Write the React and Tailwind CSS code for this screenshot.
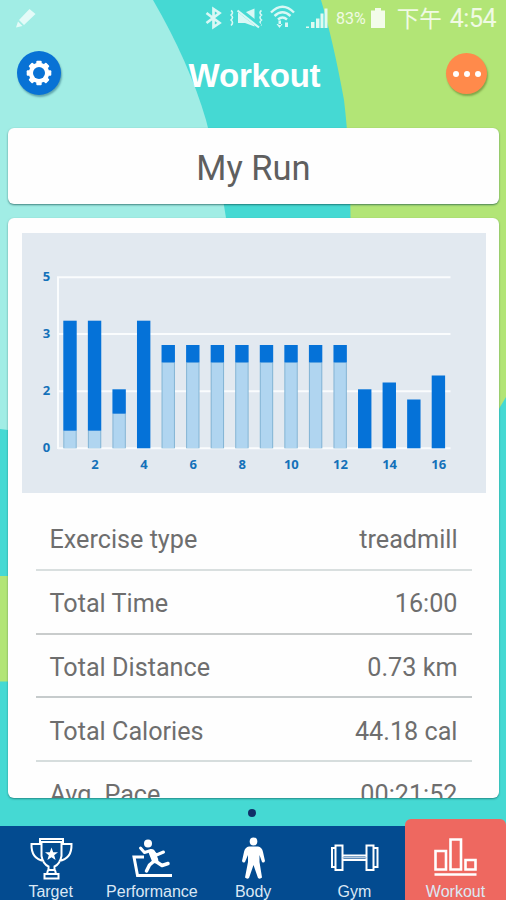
const chartBars = [
  [320.7, 430.7], [320.7, 430.7], [389.3, 413.7], [320.7, null],
  [345, 362.5], [345, 362.5], [345, 362.5], [345, 362.5],
  [345, 362.5], [345, 362.5], [345, 362.5], [345, 362.5],
  [389.3, null], [382.5, null], [399.5, null], [375.5, null],
];

const rows = [
  ['Exercise type', 'treadmill', 'h-[2px] bg-[#d9dfdf]'],
  ['Total Time', '16:00', 'h-[2px] bg-[#c9cccc]'],
  ['Total Distance', '0.73 km', 'h-[2px] bg-[#c6cbcc]'],
  ['Total Calories', '44.18 cal', 'h-[2px] bg-[#d6dddd]'],
  ['Avg. Pace', '00:21:52', 'h-[2px] bg-[#d9dfdf]'],
];

function Backdrop() {
  return (
    <svg className="absolute inset-0 h-full w-full" viewBox="0 0 506 900">
      <rect width="506" height="900" fill="#45d9d3" />
      <path d="M321 0Q333 40 344 100Q350 150 350.500 218V450H480L500 407L506 397V0Z" fill="#b2e576" />
      <path d="M0 0H153Q189 62 206 120Q219 170 226 218V430H8L0 429Z" fill="#a1ede5" />
      <rect y="576" width="20" height="105.500" fill="#b2e576" />
    </svg>
  );
}

function StatusBar() {
  return (
    <div className="flex h-9 items-start text-white/80">
      <svg className="h-9 w-[336px] shrink-0" viewBox="0 0 336 36" fill="none" stroke="#d9f8f5" strokeWidth="1.8">
        <path d="M29.500 9L35.500 14L24 25L19 20Z M18 21.500L22.500 26L16 27.500Z" fill="#e4fbf8" stroke="none" />
        <path d="M206.500 13L219.500 23L213.500 27V9L219.500 13L206.500 23" strokeWidth="2.700" />
        <path d="M231 10.500q3 2 0 4.500q3 2.500 0 5q3 2.500 0 5.500M261.500 10.500q-3 2 0 4.500q-3 2.500 0 5q-3 2.500 0 5.500" strokeWidth="1.600" />
        <path d="M238 12.500H245L254.500 8.500V26.500L245 23H238Z" fill="#d9f8f5" stroke="none" />
        <path d="M238 9L260 26.500" stroke="#45d9d3" strokeWidth="5" />
        <path d="M237.500 10.500L259 27.500" strokeWidth="2.200" />
        <path d="M271 12.500Q282.500 1 294 12.500M274.500 16Q282.500 8.500 290.500 16M278 19.500Q282.500 15.500 287 19.500" strokeWidth="2.400" />
        <path d="M276.500 24L279.500 28L282.500 24ZM278.500 20.500H281V25H278.500ZM285 27V22.500H288V27Z" fill="#d9f8f5" stroke="none" />
        <path d="M306 28V26.500H309V28ZM311 28V22H314.500V28ZM316 28V18.500H319.500V28ZM320.500 28V13.500H323.500V28ZM324.500 28V8.500H327.500V28Z" fill="#e0faf0" stroke="none" />
      </svg>
      <span className="mt-[9px] font-[Roboto,sans-serif] text-[16px] leading-5">83%</span>
      <svg className="ml-[4px] mt-2 h-5 w-4 shrink-0" viewBox="0 0 16 20">
        <path d="M5 0H11V2.500H15V20H1V2.500H5Z" fill="#f3fcea" />
      </svg>
      <span className="ml-auto mr-[10px] mt-[5px] flex gap-[8px] whitespace-nowrap font-[Roboto,'Noto_Sans_CJK_TC',sans-serif] text-[25px] leading-7 text-white/80"><span className="text-[22.500px]">下午</span><span className="tracking-[-0.5px]">4:54</span></span>
    </div>
  );
}

function Header() {
  return (
    <header className="flex h-[92px] items-start justify-between pl-[17px] pr-[19px] pt-[15px]">
      <button className="flex h-11 w-11 items-center justify-center rounded-full bg-[#0872d5] shadow-[1px_2px_2px_rgba(0,60,90,0.4)]">
        <svg className="h-7 w-7" viewBox="-14 -14 28 28">
          {[0, 45, 90, 135].map((a) => (
            <rect key={a} x="-2.700" y="-12.300" width="5.400" height="24.600" rx="1" fill="white" transform={`rotate(${a})`} />
          ))}
          <circle r="10.200" fill="white" />
          <circle r="6" fill="#0872d5" />
        </svg>
      </button>
      <h1 className="mt-[5px] pl-[2px] font-['Liberation_Sans',sans-serif] text-[33px] leading-10 font-bold tracking-[-0.2px] text-white">Workout</h1>
      <button className="mt-[2px] flex h-[41px] w-[41px] items-center justify-center gap-[5px] rounded-full bg-[#ff8a4b] shadow-[1px_2px_2px_rgba(70,90,20,0.45)]">
        <i className="h-1.5 w-1.5 rounded-full bg-white" />
        <i className="h-1.5 w-1.5 rounded-full bg-white" />
        <i className="h-1.5 w-1.5 rounded-full bg-white" />
      </button>
    </header>
  );
}

function Chart() {
  return (
    <svg className="ml-px h-[260px] w-[464px] shrink-0" viewBox="22 233 464 260">
      <rect x="22" y="233" width="464" height="260" fill="#e2e9f0" />
      <path d="M58 277.300H450.500M58 334H450.500M58 391.300H450.500M58 448.300H450.500M58 276.300V449" stroke="#fafcfd" strokeWidth="2" />
      {chartBars.map(([top, split], i) => {
        const x = 63.3 + i * 24.56;
        return (
          <g key={i}>
            {split && <rect x={x} y={split} width="13.400" height={448.300 - split} fill="#83b4d4" />}
            {split && <rect x={x + 1} y={split} width="11.400" height={448 - split} fill="#b0d5f0" />}
            <rect x={x} y={top} width="13.400" height={(split || 448.3) - top} fill="#0572d8" />
          </g>
        );
      })}
      <g className="font-['Open_Sans',sans-serif] text-[13px] font-bold" fill="#1471b9" textAnchor="middle">
        <text x="46.500" y="280.500">5</text>
        <text x="46.500" y="337.500">3</text>
        <text x="46.500" y="394.500">2</text>
        <text x="46.500" y="451.500">0</text>
        {[2, 4, 6, 8, 10, 12, 14, 16].map((n) => (
          <text key={n} x={70.3 + (n - 1) * 24.56} y="468.500">{n}</text>
        ))}
      </g>
    </svg>
  );
}

const icons = {
  Target: (
    <g fill="none" stroke="white" strokeWidth="2">
      <path d="M11 3H34V6H11ZM12.500 6V20Q14 28 19.500 30.500V34H25.500V30.500Q31 28 32.500 20V6M12 8H2.500Q2 23 15 25M33 8H42.500Q43 23 30 25M19 34L18 38H27L26 34M15.500 38H29.500V42.500H15.500Z" />
      <path d="M22.500 11.500L24.200 16.300H29L25.200 19.300L26.600 24L22.500 21.200L18.400 24L19.800 19.300L16 16.300H20.800Z" fill="white" stroke="none" />
    </g>
  ),
  Performance: (
    <g fill="none" stroke="white" strokeLinecap="round" strokeLinejoin="round">
      <circle cx="18" cy="7.500" r="4" fill="white" stroke="none" />
      <path d="M10.500 12L14.500 16.500L21 14.500L26.500 19L33.500 16" strokeWidth="3" />
      <path d="M22 16.500L25 24" strokeWidth="6.500" />
      <path d="M26 25.500L32 29.500L38 27.500M23 26L19.500 29L16.500 35" strokeWidth="3.500" />
      <path d="M14 21H4L7.500 39.500H42" strokeWidth="3" strokeLinecap="butt" strokeLinejoin="miter" />
    </g>
  ),
  Body: (
    <g fill="white">
      <ellipse cx="22.500" cy="5.500" rx="3.800" ry="4" />
      <path d="M18 10.500H27Q31 11 32 16L34 25Q33 27.500 31 26L28.500 19V26L31 41.500Q29 43.500 27 42L22.500 29L18 42Q16 43.500 14 41.500L17 26V19L14 26Q12 27.500 11 25L13 16Q14 11 18 10.500Z" />
    </g>
  ),
  Gym: (
    <g fill="none" stroke="white" strokeWidth="2">
      <path d="M3.500 12H0V31H3.500M3.500 9.500H10.500V34H3.500ZM10.500 19.500H34.500M10.500 24H34.500M34.500 9.500H41.500V34H34.500ZM41.500 12H45.500V31H41.500" />
      <path d="M10.500 21.750H34.500" stroke="#b8cbe0" strokeWidth="1.500" />
    </g>
  ),
  Workout: (
    <g fill="none" stroke="white" strokeWidth="2.600">
      <path d="M1.500 15H12V33.500H1.500ZM16.500 3.500H27V33.500H16.500ZM31.500 24H41.500V33.500H31.500ZM0.500 38.500H42.500" />
    </g>
  ),
};

function TabBar() {
  return (
    <nav className="flex h-[81px] shrink-0 items-end">
      {Object.entries(icons).map(([name, icon]) => {
        const active = name === 'Workout';
        return (
          <div key={name} className={active ? 'flex h-[81px] w-[101px] flex-col items-center rounded-t-md bg-[#ee6860] pt-[17px]' : 'flex h-[74px] w-[101.25px] flex-col items-center bg-[#034b90] pt-[10px]'}>
            <svg className="ml-px h-[45px] w-[45px] shrink-0 overflow-visible" viewBox="0 0 45 45">{icon}</svg>
            <span className="mt-px font-['Liberation_Sans',sans-serif] text-[16px] leading-5 text-[#dbe8f5]">{name}</span>
          </div>
        );
      })}
    </nav>
  );
}

export default function App() {
  return (
    <div className="relative h-[900px] w-[506px] overflow-hidden">
      <Backdrop />
      <div className="relative flex h-full flex-col">
        <StatusBar />
        <Header />
        <section className="mx-[7.5px] flex h-[76px] shrink-0 items-center justify-center rounded-md bg-[#fefefe] pl-px pt-[6px] font-[Roboto,sans-serif] text-[34.500px] text-[#5f5f5f] shadow-[0_1px_2px_rgba(0,60,60,0.6)]">
          My Run
        </section>
        <main className="mx-[7.5px] mt-[14px] flex h-[580px] shrink-0 flex-col items-center overflow-hidden rounded-md bg-[#fefefe] pt-[15px] shadow-[0_1px_2px_rgba(0,60,60,0.5)]">
          <Chart />
          <div className="ml-px mt-[14px] w-[436px] font-[Roboto,sans-serif] text-[25.200px] text-[#6e6e6e]">
            {rows.map(([label, value, line]) => (
              <div key={label}>
                <div className="flex h-[61.75px] items-center justify-between px-[14px] pt-[5px]">
                  <span>{label}</span>
                  <span>{value}</span>
                </div>
                <div className={line} />
              </div>
            ))}
          </div>
        </main>
        <div className="flex h-[21px] shrink-0 items-center justify-center pt-[9px]">
          <i className="mr-[2px] h-2 w-2 rounded-full bg-[#102f67]" />
        </div>
        <TabBar />
      </div>
    </div>
  );
}
